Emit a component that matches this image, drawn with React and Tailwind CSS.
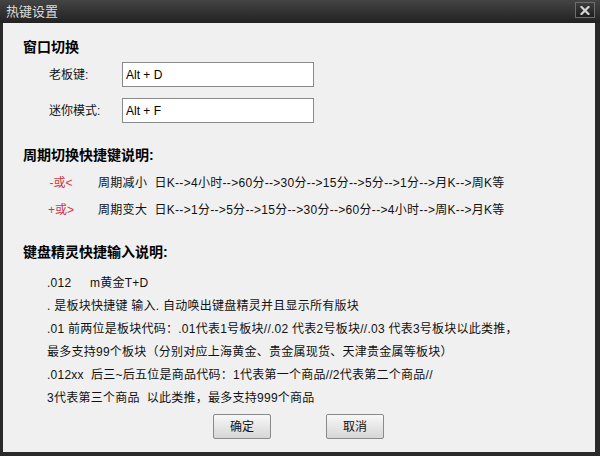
import React from 'react';

const font = { fontFamily: '"Liberation Sans", "Noto Sans CJK SC", sans-serif' };

function Field({ label, value }) {
  return (
    <div className="flex items-center h-[25px]">
      <span className="w-[73px] text-[12px] text-[#111]">{label}</span>
      <div className="w-[192px] h-[25px] bg-white border border-[#8a8a8a] flex items-center pl-[3px] text-[12px] text-black">
        {value}
      </div>
    </div>
  );
}

function CycleRow({ keyText, text, className }) {
  return (
    <div className={`flex items-center h-[20px] text-[12px] ${className}`}>
      <span className="w-[40px] text-center text-[#c83a48]">{keyText}</span>
      <span className="ml-[17px] text-[#111] whitespace-pre tracking-[0.3px]">{text}</span>
    </div>
  );
}

export default function App() {
  const lines = [
    '. 是板块快捷键 输入. 自动唤出键盘精灵并且显示所有版块',
    '.01 前两位是板块代码：.01代表1号板块//.02 代表2号板块//.03 代表3号板块以此类推，',
    '最多支持99个板块（分别对应上海黄金、贵金属现货、天津贵金属等板块）',
    '.012xx  后三~后五位是商品代码：1代表第一个商品//2代表第二个商品//',
    '3代表第三个商品  以此类推，最多支持999个商品',
  ];

  return (
    <div className="w-[600px] h-[456px] bg-[#2a2a2a] flex flex-col" style={font}>
      {/* title bar */}
      <div className="h-[23px] flex items-center justify-between bg-gradient-to-b from-[#444] to-[#222] pl-[6px] pr-[5px]">
        <span className="text-[13px] text-[#dcdcdc]">热键设置</span>
        <div className="w-[20px] h-[16px] -mt-[3px] border border-[#6e6e6e] bg-gradient-to-b from-[#3e3e3e] to-[#1e1e1e] flex items-center justify-center">
          <svg width="10" height="9" viewBox="0 0 10 9">
            <path d="M1.5 1 L8.5 8 M8.5 1 L1.5 8" stroke="#d4d4d4" strokeWidth="2.2" strokeLinecap="square" />
          </svg>
        </div>
      </div>

      {/* body */}
      <div className="flex-1 ml-[3px] mr-[5px] mb-[4px] bg-[#f0f0f0] flex flex-col">
        <div className="pl-[20px] mt-[16px] h-[16px] leading-[16px] text-[14px] font-bold text-black">窗口切换</div>

        <div className="pl-[46px] mt-[7px]">
          <Field label="老板键:" value="Alt + D" />
        </div>
        <div className="pl-[46px] mt-[11px]">
          <Field label="迷你模式:" value="Alt + F" />
        </div>

        <div className="pl-[20px] mt-[24px] h-[16px] leading-[16px] text-[14px] font-bold text-black">周期切换快捷键说明:</div>

        <div className="pl-[38px]">
          <CycleRow className="mt-[10px]" keyText="-或<" text="周期减小  日K-->4小时-->60分-->30分-->15分-->5分-->1分-->月K-->周K等" />
          <CycleRow className="mt-[7px]" keyText="+或>" text="周期变大  日K-->1分-->5分-->15分-->30分-->60分-->4小时-->周K-->月K等" />
        </div>

        <div className="pl-[20px] mt-[24px] h-[16px] leading-[16px] text-[14px] font-bold text-black">键盘精灵快捷输入说明:</div>

        <div className="pl-[44px] mt-[12px] text-[12px] leading-[23px] text-[#111] tracking-[0.25px]">
          <div className="flex">
            <span className="w-[43px]">.012</span>
            <span>m黄金T+D</span>
          </div>
          {lines.map((l) => (
            <div key={l} className="whitespace-pre">{l}</div>
          ))}
        </div>

        <div className="mt-[4px] flex justify-center gap-[55px] pr-[1px]">
          <button className="w-[58px] h-[25px] rounded-[2px] border border-[#8a8a8a] bg-gradient-to-b from-[#f8f8f8] to-[#d6d6d6] text-[12px] text-[#111]">确定</button>
          <button className="w-[58px] h-[25px] rounded-[2px] border border-[#8a8a8a] bg-gradient-to-b from-[#f8f8f8] to-[#d6d6d6] text-[12px] text-[#111]">取消</button>
        </div>
      </div>
    </div>
  );
}
